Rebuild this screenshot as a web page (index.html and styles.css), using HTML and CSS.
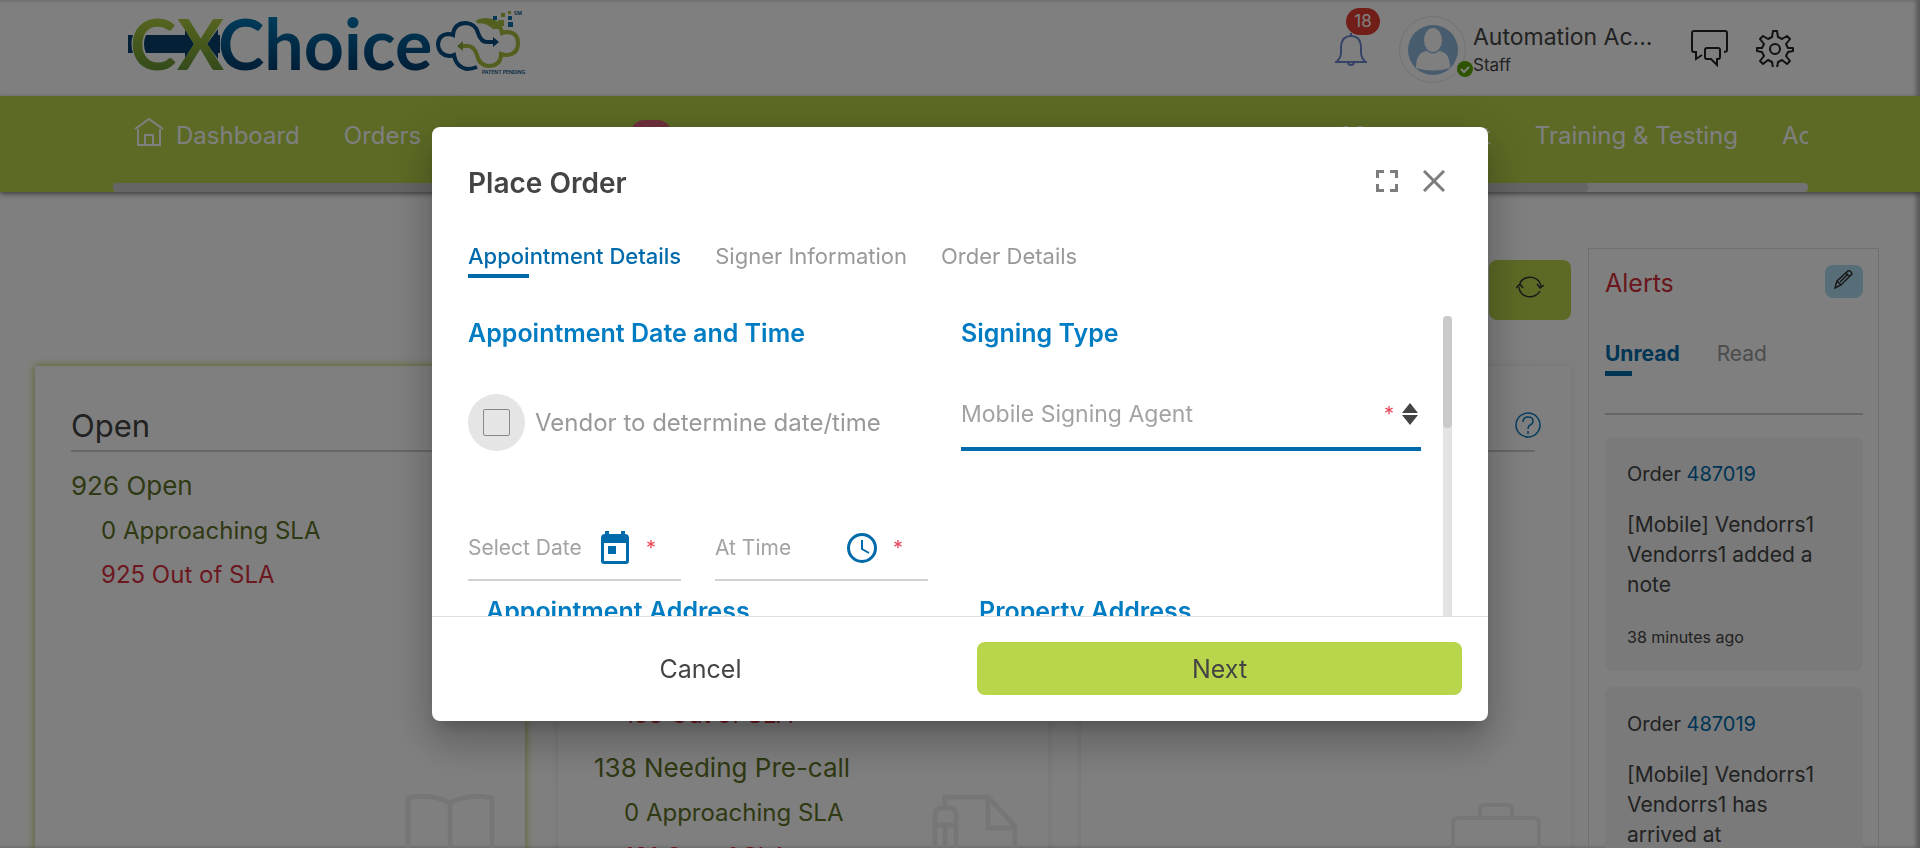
FILE: index.html
```html
<!DOCTYPE html>
<html lang="en">
<head>
<meta charset="utf-8">
<title>CXChoice – Place Order</title>
<link rel="stylesheet" href="styles.css">
</head>
<body>
<div class="app">
  <header class="header">
    <svg class="logo" width="396" height="66" viewBox="0 0 396 66" role="img" aria-label="CXChoice logo">
      <defs>
        <linearGradient id="green" x1="0" y1="0" x2="0" y2="1"><stop offset="0.15" stop-color="#b4cf3f"/><stop offset="0.9" stop-color="#5f8f35"/></linearGradient>
        <linearGradient id="blue" x1="0" y1="0" x2="0" y2="1"><stop offset="0.15" stop-color="#007cb8"/><stop offset="0.85" stop-color="#053a6b"/></linearGradient>
      </defs>
      <path fill="#06406f" d="M0 24h5q-3 9 0 18H0zM18 24h39v-6l9 15-9 15v-6H18q-4-9 0-18zM90 24v-6l-11 15 11 15v-6h2V24z"/>
      <text class="logo-text logo-green" x="2" y="59">C</text>
      <text class="logo-text logo-green" x="49" y="59">X</text>
      <text class="logo-text logo-blue" x="90" y="59">Choice</text>
      <g fill="none" stroke-width="4">
        <path stroke="#a5bf3c" d="M349 11q4-2 9-2 14 1 16 13 3-1 6-1 10 1 10 11 0 11-11 12-3 0-6-1 0 12-13 12-9-1-11-11-3-9-9-9h-8"/>
        <path stroke="#064f85" d="M349 56q-5 2-10 2-11-2-13-14-2 1-5 1-10-1-11-11 0-10 10-11 3 0 5 1 1-12 13-12 10 1 12 10 3 9 9 9h8"/>
      </g>
      <path fill="#a5bf3c" d="M348 12q6-6 17-3 6 3 8 9h-8q-7-7-17-6z"/>
      <path fill="#064f85" d="M365 26l6 5-6 5z"/>
      <path fill="#8aab3a" d="M335 30l-6 5 6 5z"/>
      <path fill="#a5bf3c" d="M373 2h4v4h-4zM370 9h6v6h-6zM380 0h3v3h-3z"/>
      <path fill="#0b6fae" d="M365 5h4v4h-4zM380 5h4v4h-4zM380 11h5v5h-5z"/>
      <text class="logo-small" x="386" y="4">SM</text>
      <text class="logo-small" x="354" y="63">PATENT PENDING</text>
    </svg>
    <div class="header-tools">
      <button class="bell" aria-label="Notifications">
        <svg width="34" height="34" viewBox="0 0 34 34" fill="none" stroke="#6f84cf" stroke-width="2"><path d="M1 30h32M3 29q4-3 4-9v-6q1-10 10-10t10 10v6q0 6 4 9M17 4V1M14 30q0 3 3 3t3-3"/></svg>
        <span class="bell-count">18</span>
      </button>
      <div class="user">
        <span class="avatar">
          <svg width="50" height="50" viewBox="0 0 50 50"><circle cx="25" cy="25" r="25" fill="#8fb9dc"/><ellipse cx="25" cy="15" rx="9" ry="12" fill="#fff"/><path fill="#fff" d="M8 43q0-16 11-17q6 5 12 0q11 1 11 17q-17 5-34 0z"/></svg>
          <svg class="status" width="16" height="16" viewBox="0 0 16 16"><circle cx="8" cy="8" r="8" fill="#5fa800"/><path d="M4 8l3 3 5-5" fill="none" stroke="#fff" stroke-width="2"/></svg>
        </span>
        <span class="user-text"><span class="user-name">Automation Ac...</span><span class="user-role">Staff</span></span>
      </div>
      <button class="tool" aria-label="Messages">
        <svg width="38" height="38" viewBox="0 0 38 38" fill="none" stroke="#222" stroke-width="2"><path d="M12 26l-6 4v-7H4q-2 0-2-2V4q0-2 2-2h31q2 0 2 2v17q0 2-3 2"/><path d="M17 19h11q2 0 2 2v7q0 2-2 2h-1v6l-6-6h-4q-2 0-2-2v-7q0-2 2-2z"/></svg>
      </button>
      <button class="tool" aria-label="Settings">
        <svg width="38" height="38" viewBox="0 0 38 38" fill="none" stroke="#222" stroke-width="2" stroke-linejoin="round"><path d="M17 2h4l1 6 4 2 5-3 3 3-4 5 2 4 5 0v3l-5 1-2 4 4 5-3 3-5-4-4 2-1 6h-4l-1-6-4-2-5 4-3-3 4-5-2-4-5-1v-3l5 0 2-4-4-5 3-3 5 3 4-2z"/><circle cx="19" cy="20" r="5"/></svg>
      </button>
    </div>
  </header>

  <nav class="nav">
    <div class="nav-scroller">
      <div class="nav-items">
        <a class="nav-link" href="#"><svg width="30" height="30" viewBox="0 0 30 30" fill="none" stroke="#fff" stroke-width="2"><path d="M1 12L15 2l14 10M4 12v16h22V12M11 28V18h8v10"/></svg>Dashboard</a>
        <a class="nav-link" href="#">Orders</a>
        <div class="nav-middle">
          <span class="nav-badge"></span>
          <a class="nav-link" href="#">Management</a>
        </div>
        <a class="nav-link" href="#">Training &amp; Testing</a>
        <a class="nav-link nav-cut" href="#">Ac</a>
      </div>
      <div class="nav-track"><div class="nav-thumb"></div></div>
    </div>
  </nav>

  <main class="page">
    <div class="board">
      <div class="toolbar">
        <button class="refresh" aria-label="Refresh"><svg width="28" height="24" viewBox="0 0 28 24" fill="none" stroke="#333" stroke-width="1.500"><path d="M4 8a11 10 0 0 1 21 4M24 16a11 10 0 0 1-21-4M0 13l4-4 3 4M28 10l-4 3-3-4"/></svg></button>
      </div>
      <div class="cards">
        <section class="card card-active">
          <h2 class="card-title">Open</h2>
          <p class="stat">926 Open</p>
          <p class="sub">0 Approaching SLA</p>
          <p class="sub late">925 Out of SLA</p>
          <svg class="card-icon" width="90" height="80" viewBox="0 0 90 80" fill="none" stroke="#ededed" stroke-width="5"><path d="M45 78V9Q26-1 3 4v74M45 9Q64-1 87 4v74"/></svg>
        </section>
        <section class="card card-lower">
          <p class="sub late">133 Out of SLA</p>
          <p class="stat">138 Needing Pre-call</p>
          <p class="sub">0 Approaching SLA</p>
          <p class="sub late">131 Out of SLA</p>
          <svg class="card-icon" width="86" height="80" viewBox="0 0 86 80" fill="none" stroke="#ededed" stroke-width="5"><path d="M13 12V3h43l27 29v48M56 3v31h27M3 80V21q0-7 7-7h7q7 0 7 7v59M3 31h21M13 31v49"/></svg>
        </section>
        <section class="card">
          <div class="card-title">
            <svg class="help" width="26" height="26" viewBox="0 0 26 26" fill="none" stroke="#0a7abf" stroke-width="1.500"><circle cx="13" cy="13" r="12"/><path d="M8 10q0-5 5-5t5 4q0 3-3 4-2 1-2 4M13 19v3"/></svg>
          </div>
          <svg class="card-icon card-icon-low" width="90" height="80" viewBox="0 0 90 80" fill="none" stroke="#ededed" stroke-width="4"><path d="M2 80V19q0-4 4-4h78q4 0 4 4v61M29 15V6q0-4 4-4h24q4 0 4 4v9"/></svg>
        </section>
      </div>
    </div>

    <aside class="alerts">
      <div class="alerts-head">
        <h2 class="alerts-title">Alerts</h2>
        <button class="edit" aria-label="Edit alerts"><svg width="20" height="20" viewBox="0 0 20 20" fill="none" stroke="#333" stroke-width="1.500"><path d="M1 19l2-7L14 2q3-1 4 3L7 16zM3 12l4 4M12 4l4 4M6 13l8-8"/></svg></button>
      </div>
      <div class="alerts-tabs">
        <button class="alerts-tab alerts-tab-on">Unread</button>
        <button class="alerts-tab">Read</button>
      </div>
      <article class="alert">
        <p class="alert-order">Order <a href="#">487019</a></p>
        <p class="alert-body">[Mobile] Vendorrs1<br>Vendorrs1 added a<br>note</p>
        <p class="alert-time">38 minutes ago</p>
      </article>
      <article class="alert">
        <p class="alert-order">Order <a href="#">487019</a></p>
        <p class="alert-body">[Mobile] Vendorrs1<br>Vendorrs1 has<br>arrived at</p>
      </article>
    </aside>
  </main>
</div>

<div class="overlay">
  <div class="modal" role="dialog" aria-modal="true" aria-labelledby="modal-title">
    <div class="modal-head">
      <h1 class="modal-title" id="modal-title">Place Order</h1>
      <div class="modal-tools">
        <button class="icon-btn" aria-label="Full screen"><svg width="22" height="22" viewBox="0 0 22 22" fill="none" stroke="#7d7d7d" stroke-width="3"><path d="M1.500 8V1.500H8M14 1.500h6.500V8M20.500 14v6.500H14M8 20.500H1.500V14"/></svg></button>
        <button class="icon-btn" aria-label="Close"><svg width="22" height="22" viewBox="0 0 22 22" fill="none" stroke="#7d7d7d" stroke-width="3"><path d="M1 1l20 20M21 1L1 21"/></svg></button>
      </div>
    </div>
    <div class="tabs">
      <button class="tab tab-on">Appointment Details</button>
      <button class="tab">Signer Information</button>
      <button class="tab">Order Details</button>
    </div>
    <div class="modal-body">
      <form class="form">
        <div class="col">
          <h3 class="heading">Appointment Date and Time</h3>
          <label class="check"><span class="halo"><input class="box" type="checkbox"></span>Vendor to determine date/time</label>
          <div class="pair">
            <label class="field">
              <input class="field-input" type="text" placeholder="Select Date" aria-label="Select Date">
              <svg width="30" height="34" viewBox="0 0 30 34"><path fill="#006aaa" d="M5 3V0h4v3h12V0h4v3q4 0 4 4v23q0 3-3 3H4q-3 0-3-3V7q0-4 4-4zM4 12v18h22V12z"/><path fill="#006aaa" d="M8 15h8v8H8z"/></svg>
              <span class="star">*</span>
            </label>
            <label class="field">
              <input class="field-input" type="text" placeholder="At Time" aria-label="At Time">
              <svg width="30" height="30" viewBox="0 0 30 30" fill="none" stroke="#006aaa" stroke-width="3"><circle cx="15" cy="15" r="13.500"/><path stroke-width="2" d="M15 7v9l7 4"/></svg>
              <span class="star">*</span>
            </label>
          </div>
          <h3 class="heading heading-in">Appointment Address</h3>
        </div>
        <div class="col">
          <h3 class="heading">Signing Type</h3>
          <label class="select">
            <select class="select-input" aria-label="Signing Type"><option>Mobile Signing Agent</option></select>
            <span class="star">*</span>
            <svg width="16" height="22" viewBox="0 0 16 22" fill="#444"><path d="M8 0l8 10H0zM8 22l8-10H0z"/></svg>
          </label>
          <h3 class="heading heading-in">Property Address</h3>
        </div>
      </form>
      <div class="bar"><div class="bar-thumb"></div></div>
    </div>
    <div class="modal-foot">
      <button class="btn">Cancel</button>
      <button class="btn btn-go">Next</button>
    </div>
  </div>
</div>
</body>
</html>
```
FILE: styles.css
```css
* { box-sizing: border-box; }
body, h1, h2, h3, p { margin: 0; font-weight: 400; }
body { font-family: Inter, "Open Sans", sans-serif; color: #444; background: #fff; overflow: hidden; }
button, input, select { font: inherit; color: inherit; border: 0; background: none; padding: 0; margin: 0; }
button { cursor: pointer; }
a { text-decoration: none; }
svg { display: block; flex: none; }

.app { height: 100vh; overflow: hidden; display: flex; flex-direction: column; box-shadow: inset -4px 0 4px rgba(0, 0, 0, .3); }

/* header */
.header { flex: none; height: 96px; padding: 0 126px 0 128px; display: flex; align-items: flex-start; justify-content: space-between; }
.logo { margin-top: 11px; overflow: visible; }
.logo-text { font-family: Lato, sans-serif; font-size: 70px; font-weight: 700; }
.logo-green { fill: url(#green); }
.logo-blue { fill: url(#blue); }
.logo-small { font-size: 5px; font-weight: 600; fill: #064f85; }
.header-tools { display: flex; align-items: flex-start; }
.bell { position: relative; margin: 32px 31px 0 0; }
.bell-count { position: absolute; left: 12px; top: -24px; width: 34px; height: 27px; border-radius: 17px; background: #e23c32; color: #fff; font-size: 17px; line-height: 27px; }
.user { display: flex; margin-top: 16px; width: 291px; }
.avatar { position: relative; width: 67px; height: 67px; border: 1px solid #e4e4e4; border-radius: 50%; display: grid; place-items: center; flex: none; }
.status { position: absolute; right: -8px; bottom: 5px; }
.user-text { display: flex; flex-direction: column; padding: 5px 0 0 7px; white-space: nowrap; }
.user-name { font-size: 23px; line-height: 32px; }
.user-role { font-size: 17px; line-height: 24px; }
.tool { margin: 29px 0 0 28px; }
.tool:nth-of-type(2) { margin-left: 0; }

/* navigation */
.nav { flex: none; height: 96px; background: #b8d54b; padding: 0 112px 0 113px; box-shadow: 0 2px 5px rgba(0, 0, 0, .5); }
.nav-scroller { height: 96px; display: flex; flex-direction: column; justify-content: space-between; }
.nav-items { display: flex; gap: 44px; padding: 21px 0 0 21px; overflow: hidden; white-space: nowrap; }
.nav-link { color: #fff; font-size: 24px; line-height: 38px; display: flex; gap: 12px; flex: none; }
.nav-middle { flex: 1; display: flex; justify-content: space-between; padding-left: 166px; }
.nav-badge { width: 40px; height: 26px; border-radius: 13px; background: #e0607a; margin-top: 3px; }
.nav-cut { width: 26px; overflow: hidden; }
.nav-track { height: 9px; border-radius: 4px; background: #e4e4e4; }
.nav-thumb { width: 87%; height: 9px; border-radius: 4px; background: #cacaca; }

/* dashboard */
.page { flex: 1; min-height: 0; display: flex; gap: 17px; padding: 56px 41px 0 35px; }
.board { flex: 1; display: flex; flex-direction: column; gap: 46px; min-width: 0; }
.toolbar { display: flex; justify-content: flex-end; padding-top: 12px; }
.refresh { width: 82px; height: 60px; border-radius: 8px; background: #b8d54b; display: flex; justify-content: center; padding-top: 15px; }
.cards { flex: 1; min-height: 0; display: grid; grid-template-columns: repeat(3, 1fr); gap: 33px; }
.card { position: relative; padding: 36px 36px 0; height: 600px; box-shadow: 0 0 8px rgba(0, 0, 0, .1); }
.card-active { box-shadow: 0 0 8px #a9c73a; }
.card-lower { padding-top: 327px; }
.card-title { position: relative; font-size: 31px; line-height: 48px; height: 50px; border-bottom: 2px solid #ccc; margin-bottom: 11px; }
.help { position: absolute; right: -6px; top: 10px; }
.stat { font-size: 26px; line-height: 46px; color: #5f7226; }
.late + .stat { margin-top: 8px; }
.sub { font-size: 24px; line-height: 44px; color: #5f7226; padding-left: 30px; }
.late { color: #d9313f; }
.card-icon { position: absolute; right: 30px; top: 428px; }
.card-icon-low { top: 437px; }

/* alerts */
.alerts { width: 291px; height: 800px; border: 1px solid #e0e0e0; padding: 16px 15px 16px 16px; }
.alerts-head { display: flex; justify-content: space-between; align-items: flex-start; }
.alerts-title { font-size: 25px; line-height: 36px; color: #d32f3a; }
.edit { width: 38px; height: 33px; border-radius: 8px; background: #afdcf0; display: flex; justify-content: center; padding-top: 4px; }
.alerts-tabs { display: flex; gap: 37px; padding: 35px 0 37px; border-bottom: 2px solid #ccc; margin-bottom: 22px; }
.alerts-tab { font-size: 21px; line-height: 36px; height: 40px; color: #999; padding-bottom: 4px; }
.alerts-tab-on { color: #006aaa; font-weight: 700; background: linear-gradient(#006aaa, #006aaa) 0 100% / 27px 5px no-repeat; }
.alert { background: #f4f4f4; border-radius: 8px; padding: 22px 22px 22px; margin-bottom: 16px; }
.alert-order { font-size: 20px; line-height: 30px; margin-bottom: 21px; }
.alert-order a { color: #006aaa; }
.alert-body { font-size: 21px; line-height: 30px; margin-bottom: 25px; white-space: nowrap; }
.alert-time { font-size: 16px; line-height: 24px; }

/* dialog */
.overlay { position: fixed; inset: 0; background: rgba(0, 0, 0, .5); display: flex; align-items: center; justify-content: center; }
.modal { width: 55%; background: #fff; border-radius: 8px; box-shadow: 0 11px 15px -7px rgba(0, 0, 0, .2), 0 24px 38px 3px rgba(0, 0, 0, .14), 0 9px 46px 8px rgba(0, 0, 0, .12); }
.modal-head { display: flex; justify-content: space-between; padding: 36px 43px 0 36px; }
.modal-title { font-size: 28px; line-height: 40px; font-weight: 600; }
.modal-tools { display: flex; gap: 25px; padding-top: 7px; align-items: flex-start; }
.tabs { display: flex; gap: 34px; padding: 37px 36px 0; }
.tab { font-size: 22px; line-height: 32px; height: 38px; padding-bottom: 6px; color: #999; white-space: nowrap; }
.tab-on { color: #006aaa; font-weight: 500; background: linear-gradient(#006aaa, #006aaa) 0 100% / 61px 4px no-repeat; }
.modal-body { height: 300px; margin-top: 38px; padding: 0 36px; display: flex; justify-content: space-between; gap: 22px; overflow: hidden; }
.form { flex: 1; display: grid; grid-template-columns: 1fr 1fr; gap: 33px; }
.heading { font-size: 25px; line-height: 34px; font-weight: 600; color: #007cc3; white-space: nowrap; }
.check { display: flex; align-items: center; gap: 10px; margin-top: 44px; font-size: 24px; color: #999; white-space: nowrap; }
.halo { width: 57px; height: 57px; border-radius: 50%; background: #e5e5e5; display: grid; place-items: center; }
.box { appearance: none; width: 27px; height: 27px; border: 1px solid #888; border-radius: 2px; }
.pair { display: grid; grid-template-columns: 1fr 1fr; gap: 34px; margin-top: 64px; }
.field { height: 66px; border-bottom: 2px solid #d2d2d2; display: flex; align-items: center; gap: 16px; padding: 2px 27px 0 0; }
.field-input { flex: 1; min-width: 0; width: 0; font-size: 21px; line-height: 30px; outline: 0; }
.field-input::placeholder { color: #a3a3a3; opacity: 1; }
.field .star { width: 8px; }
.star { color: #e8465a; font-size: 20px; line-height: 20px; }
.select { height: 66px; margin-top: 35px; border-bottom: 4px solid #006aaa; display: flex; align-items: center; gap: 8px; padding: 0 3px 4px 0; }
.select-input { appearance: none; flex: 1; min-width: 0; font-size: 23px; line-height: 34px; color: #a3a3a3; outline: 0; }
.heading-in { margin-top: 13px; padding-left: 18px; }
.select + .heading-in { margin-top: 143px; }
.bar { width: 9px; background: #e3e3e3; border-radius: 4px 4px 0 0; }
.bar-thumb { height: 112px; border-radius: 4px; background: #cacaca; }
.modal-foot { border-top: 1px solid #e0e0e0; display: grid; grid-template-columns: 1fr 1fr; gap: 34px; padding: 25px 26px 26px; }
.btn { height: 53px; font-size: 25px; border-radius: 8px; }
.btn-go { background: #b8d54b; }
```
